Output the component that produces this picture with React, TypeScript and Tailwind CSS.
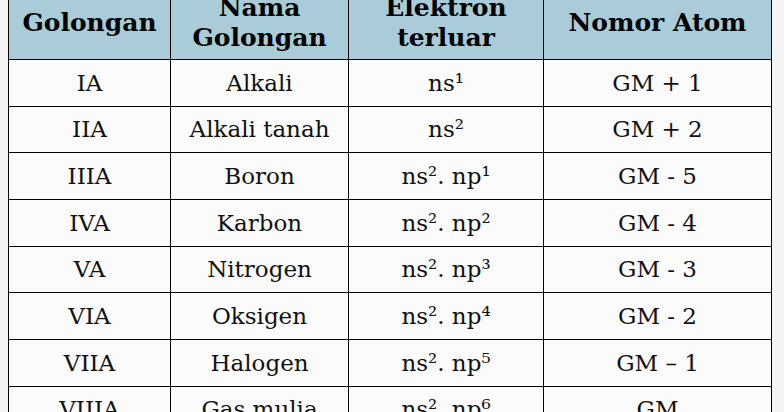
const rows = [
  { gol: 'IA', nama: 'Alkali', elektron: 'ns¹', atom: 'GM + 1' },
  { gol: 'IIA', nama: 'Alkali tanah', elektron: 'ns²', atom: 'GM + 2' },
  { gol: 'IIIA', nama: 'Boron', elektron: 'ns². np¹', atom: 'GM - 5' },
  { gol: 'IVA', nama: 'Karbon', elektron: 'ns². np²', atom: 'GM - 4' },
  { gol: 'VA', nama: 'Nitrogen', elektron: 'ns². np³', atom: 'GM - 3' },
  { gol: 'VIA', nama: 'Oksigen', elektron: 'ns². np⁴', atom: 'GM - 2' },
  { gol: 'VIIA', nama: 'Halogen', elektron: 'ns². np⁵', atom: 'GM – 1' },
  { gol: 'VIIIA', nama: 'Gas mulia', elektron: 'ns². np⁶', atom: 'GM' },
];

const cols = 'grid grid-cols-[162px_178px_195px_227px]';
const cell = 'flex items-center justify-center text-center border-r border-black';

export default function App() {
  return (
    <div className="h-[412px] w-[784px] overflow-hidden bg-[#f4f4f4] font-['DejaVu_Serif',serif] text-[#111]">
      <div className="-mt-[14px] ml-[8px] w-[764px] border-x border-black bg-[#fbfbfb]">
        <div className={`${cols} h-[74px] border-b border-black bg-[#a9ccd8] text-[25px] font-bold leading-[30px] text-black`}>
          <div className={cell}>Golongan</div>
          <div className={cell}>
            Nama
            <br />
            Golongan
          </div>
          <div className={cell}>
            Elektron
            <br />
            terluar
          </div>
          <div className="flex items-center justify-center text-center">Nomor Atom</div>
        </div>
        {rows.map((r) => (
          <div key={r.gol} className={`${cols} h-[46.67px] border-b border-black text-[23px]`}>
            <div className={cell}>{r.gol}</div>
            <div className={cell}>{r.nama}</div>
            <div className={cell}>{r.elektron}</div>
            <div className="flex items-center justify-center text-center">{r.atom}</div>
          </div>
        ))}
      </div>
    </div>
  );
}
